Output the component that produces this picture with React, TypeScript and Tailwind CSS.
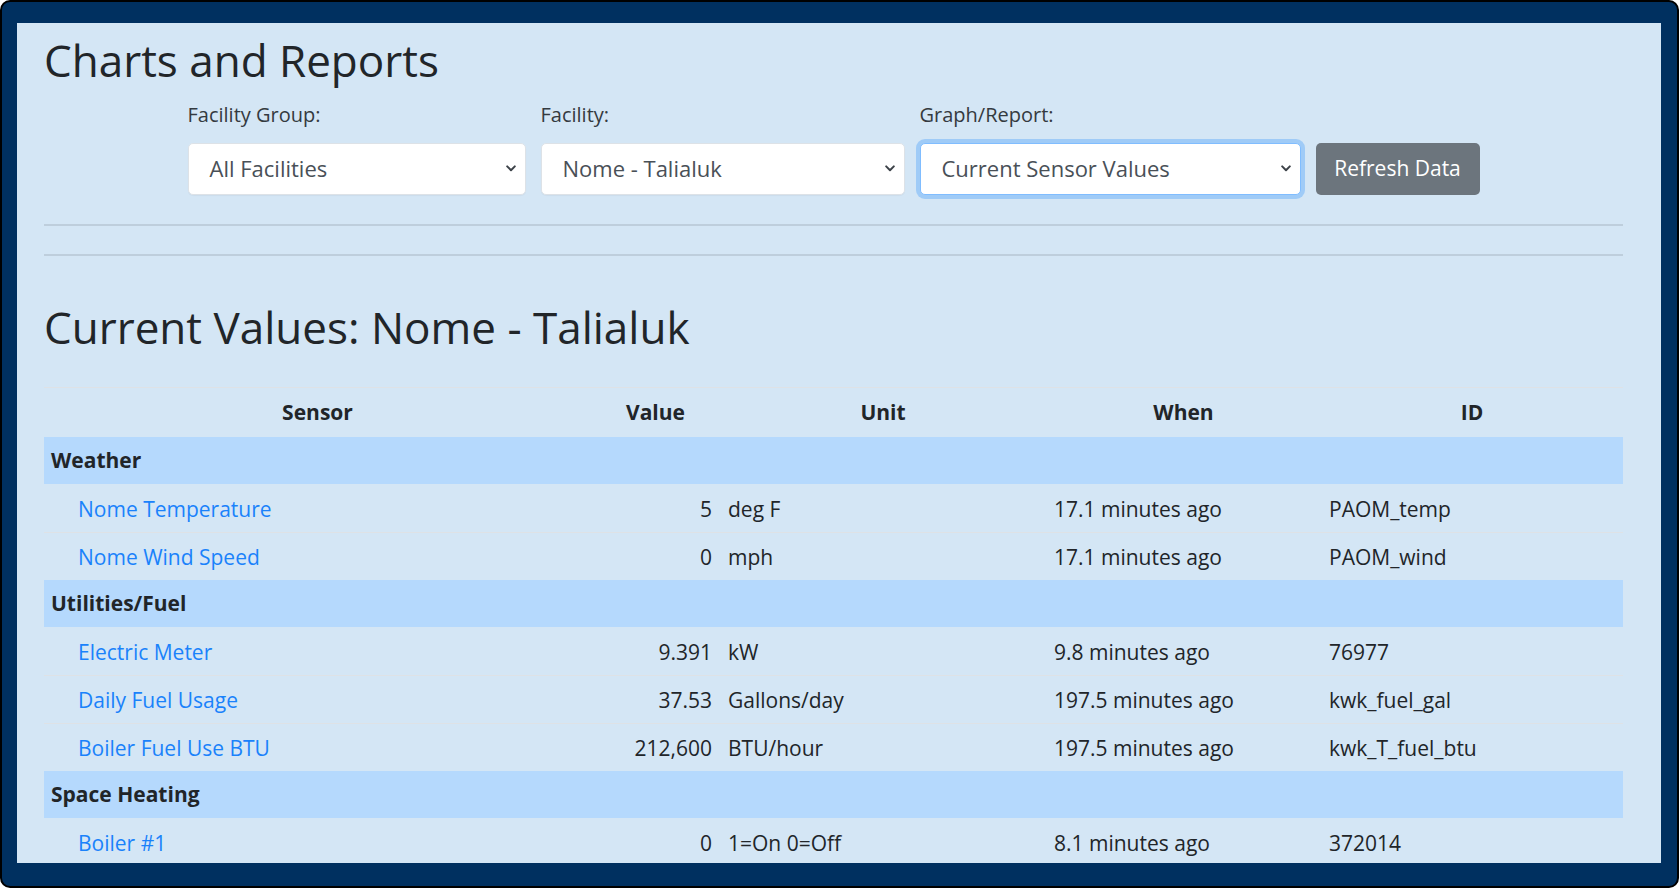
import React from 'react'

interface SensorRow {
  name: string
  value: string
  unit: string
  when: string
  id: string
}

interface SensorGroup {
  title: string
  rows: SensorRow[]
}

const groups: SensorGroup[] = [
  {
    title: 'Weather',
    rows: [
      { name: 'Nome Temperature', value: '5', unit: 'deg F', when: '17.1 minutes ago', id: 'PAOM_temp' },
      { name: 'Nome Wind Speed', value: '0', unit: 'mph', when: '17.1 minutes ago', id: 'PAOM_wind' },
    ],
  },
  {
    title: 'Utilities/Fuel',
    rows: [
      { name: 'Electric Meter', value: '9.391', unit: 'kW', when: '9.8 minutes ago', id: '76977' },
      { name: 'Daily Fuel Usage', value: '37.53', unit: 'Gallons/day', when: '197.5 minutes ago', id: 'kwk_fuel_gal' },
      { name: 'Boiler Fuel Use BTU', value: '212,600', unit: 'BTU/hour', when: '197.5 minutes ago', id: 'kwk_T_fuel_btu' },
    ],
  },
  {
    title: 'Space Heating',
    rows: [
      { name: 'Boiler #1', value: '0', unit: '1=On 0=Off', when: '8.1 minutes ago', id: '372014' },
    ],
  },
]

function Chevron() {
  return (
    <svg width="10" height="7" viewBox="0 0 10 7" fill="none">
      <path d="M1.2 1.4 L5 5.2 L8.8 1.4" stroke="#3d4349" strokeWidth="2" strokeLinecap="round" strokeLinejoin="round" />
    </svg>
  )
}

interface SelectFieldProps {
  label: string
  value: string
  width: string
  focused?: boolean
}

function SelectField({ label, value, width, focused }: SelectFieldProps) {
  return (
    <div className={`flex flex-col ${width}`}>
      <label className="mb-[13px] text-[20px] leading-[30px] text-[#343a40]">{label}</label>
      <div
        className={`flex h-[52px] items-center justify-between rounded-[5px] border bg-white pr-[9px] pl-[21px] text-[22px] text-[#495057] ${
          focused ? 'border-[#80bdff] shadow-[0_0_0_4px_rgba(0,123,255,0.25)]' : 'border-[#dde2e7] shadow-[0_1px_1px_rgba(0,0,0,0.04)]'
        }`}
      >
        <span>{value}</span>
        <Chevron />
      </div>
    </div>
  )
}

export default function App() {
  return (
    <div className="h-[888px] w-full overflow-hidden rounded-[10px] border-2 border-black bg-[#003060] pt-[21px] pr-[16px] pb-[23px] pl-[15px] font-['Open_Sans',sans-serif]">
      <div className="h-full overflow-hidden bg-[#d4e6f5] pt-[11px] pr-[38px] pl-[27px] text-[#212529]">
        <h1 className="text-[44px] leading-[1.2] font-medium">Charts and Reports</h1>

        {/* filter bar */}
        <div className="mt-[13px] flex items-end justify-center gap-[15px]">
          <SelectField label="Facility Group:" value="All Facilities" width="w-[338px]" />
          <SelectField label="Facility:" value="Nome - Talialuk" width="w-[364px]" />
          <SelectField label="Graph/Report:" value="Current Sensor Values" width="w-[381px]" focused />
          <button className="h-[52px] w-[164px] rounded-[5px] bg-[#6c757d] text-[21px] text-white">Refresh Data</button>
        </div>

        <hr className="mt-[29px] border-t-2 border-black/10" />
        <hr className="mt-[28px] border-t-2 border-black/10" />

        <h2 className="mt-[45px] text-[44px] leading-[1.2] font-medium">Current Values: Nome - Talialuk</h2>

        {/* sensor table */}
        <table className="mt-[33px] w-full table-fixed border-collapse text-[21px]">
          <colgroup>
            <col className="w-[547px]" />
            <col className="w-[129px]" />
            <col className="w-[326px]" />
            <col className="w-[275px]" />
            <col className="w-[302px]" />
          </colgroup>
          <thead>
            <tr className="h-[50px] border-t border-[#dee2e6] font-bold">
              <th className="px-2 text-center">Sensor</th>
              <th className="px-2 text-center">Value</th>
              <th className="px-2 text-center">Unit</th>
              <th className="px-2 text-center">When</th>
              <th className="px-2 text-center">ID</th>
            </tr>
          </thead>
          <tbody>
            {groups.map((g) => (
              <React.Fragment key={g.title}>
                <tr className="h-[47px] bg-[#b5d9fd]">
                  <td colSpan={5} className="pl-[7px] font-bold">{g.title}</td>
                </tr>
                {g.rows.map((r, i) => (
                  <tr key={r.id} className={`h-[48px] ${i > 0 ? 'border-t border-[#dee2e6]' : ''}`}>
                    <td className="pt-[3px] pl-[34px]">
                      <a className="text-[#1a82fb]">{r.name}</a>
                    </td>
                    <td className="px-2 pt-[3px] text-right">{r.value}</td>
                    <td className="px-2 pt-[3px]">{r.unit}</td>
                    <td className="px-2 pt-[3px]">{r.when}</td>
                    <td className="px-2 pt-[3px]">{r.id}</td>
                  </tr>
                ))}
              </React.Fragment>
            ))}
          </tbody>
        </table>
      </div>
    </div>
  )
}
